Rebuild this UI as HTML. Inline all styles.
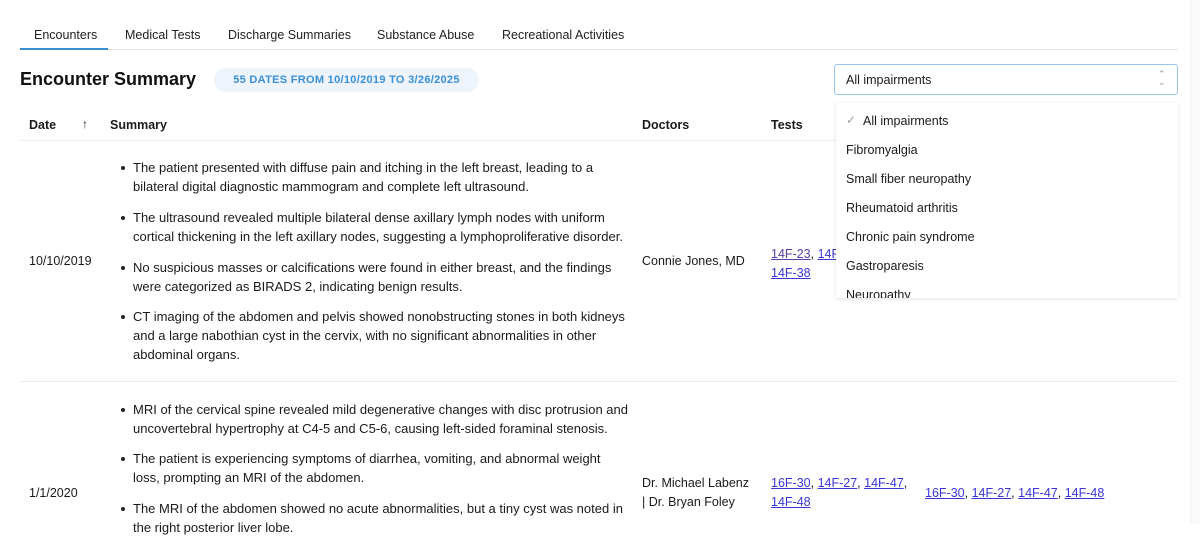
<!DOCTYPE html>
<html><head><meta charset="utf-8"><style>
*{margin:0;padding:0;box-sizing:border-box}
body{width:1200px;height:524px;overflow:hidden;background:#fff;font-family:"Liberation Sans",sans-serif;color:#1a1a1a;position:relative;font-size:12.5px}
.a{position:absolute;white-space:nowrap}
.tab{position:absolute;top:28px;font-size:12.5px;color:#222}
a{color:#3b35d6;text-decoration:underline}
.li{position:absolute;left:133px;line-height:19px;font-size:13px;white-space:nowrap}
.li:before{content:"";position:absolute;left:-12px;top:8px;width:4px;height:4px;border-radius:2px;background:#222}
</style></head><body>
<div class="tab" style="left:34px">Encounters</div>
<div class="tab" style="left:125px">Medical Tests</div>
<div class="tab" style="left:228px">Discharge Summaries</div>
<div class="tab" style="left:377px">Substance Abuse</div>
<div class="tab" style="left:502px">Recreational Activities</div>
<div class="a" style="left:20px;top:49px;width:1158px;height:1px;background:#dde3e8"></div>
<div class="a" style="left:20px;top:48px;width:88px;height:2px;background:#3a8fd0"></div>
<div class="a" style="left:20px;top:69px;font-size:18px;font-weight:bold;color:#111">Encounter Summary</div>
<div class="a" style="left:214px;top:68px;width:265px;height:24px;border-radius:12px;background:#edf4fc;color:#3a8fd8;font-size:11px;font-weight:bold;line-height:24px;text-align:center;letter-spacing:.3px">55 DATES FROM 10/10/2019 TO 3/26/2025</div>
<div class="a" style="left:29px;top:118px;font-weight:bold">Date</div>
<div class="a" style="left:82px;top:117px;font-size:12px">↑</div>
<div class="a" style="left:110px;top:118px;font-weight:bold">Summary</div>
<div class="a" style="left:642px;top:118px;font-weight:bold">Doctors</div>
<div class="a" style="left:771px;top:118px;font-weight:bold">Tests</div>
<div class="a" style="left:20px;top:140px;width:1158px;height:1px;background:#eceff1"></div>
<div class="li" style="top:158px">The patient presented with diffuse pain and itching in the left breast, leading to a<br>bilateral digital diagnostic mammogram and complete left ultrasound.</div>
<div class="li" style="top:208px">The ultrasound revealed multiple bilateral dense axillary lymph nodes with uniform<br>cortical thickening in the left axillary nodes, suggesting a lymphoproliferative disorder.</div>
<div class="li" style="top:258px">No suspicious masses or calcifications were found in either breast, and the findings<br>were categorized as BIRADS 2, indicating benign results.</div>
<div class="li" style="top:307px">CT imaging of the abdomen and pelvis showed nonobstructing stones in both kidneys<br>and a large nabothian cyst in the cervix, with no significant abnormalities in other<br>abdominal organs.</div>
<div class="a" style="left:29px;top:254px">10/10/2019</div>
<div class="a" style="left:642px;top:254px">Connie Jones, MD</div>
<div class="a" style="left:771px;top:245px;line-height:19px"><a style="color:#5a3fa8">14F-23</a>, <a>14F</a><br><a>14F-38</a></div>
<div class="a" style="left:20px;top:381px;width:1158px;height:1px;background:#eceff1"></div>
<div class="li" style="top:400px">MRI of the cervical spine revealed mild degenerative changes with disc protrusion and<br>uncovertebral hypertrophy at C4-5 and C5-6, causing left-sided foraminal stenosis.</div>
<div class="li" style="top:449px">The patient is experiencing symptoms of diarrhea, vomiting, and abnormal weight<br>loss, prompting an MRI of the abdomen.</div>
<div class="li" style="top:499px">The MRI of the abdomen showed no acute abnormalities, but a tiny cyst was noted in<br>the right posterior liver lobe.</div>
<div class="a" style="left:29px;top:486px">1/1/2020</div>
<div class="a" style="left:642px;top:474px;line-height:19px">Dr. Michael Labenz<br>| Dr. Bryan Foley</div>
<div class="a" style="left:771px;top:474px;line-height:19px"><a>16F-30</a>, <a>14F-27</a>, <a>14F-47</a>,<br><a>14F-48</a></div>
<div class="a" style="left:925px;top:486px"><a>16F-30</a>, <a>14F-27</a>, <a>14F-47</a>, <a>14F-48</a></div>
<div class="a" style="left:1190px;top:0;width:10px;height:524px;background:#fafafa;border-left:1px solid #f0f0f0"></div>
<div class="a" style="left:834px;top:64px;width:344px;height:31px;border:1px solid #9cc3ea;border-radius:3px;background:#fff"></div>
<div class="a" style="left:846px;top:73px">All impairments</div>
<div class="a" style="left:1158px;top:70px;font-size:9px;color:#999;line-height:8px">⌃<br>⌄</div>
<div class="a" style="left:836px;top:103px;width:342px;height:195px;background:#fff;box-shadow:0 1px 4px rgba(0,0,0,.12);overflow:hidden">
<div class="a" style="left:10px;top:10px;color:#999;font-size:12px">✓</div>
<div class="a" style="left:27px;top:11px">All impairments</div>
<div class="a" style="left:10px;top:40px">Fibromyalgia</div>
<div class="a" style="left:10px;top:69px">Small fiber neuropathy</div>
<div class="a" style="left:10px;top:98px">Rheumatoid arthritis</div>
<div class="a" style="left:10px;top:127px">Chronic pain syndrome</div>
<div class="a" style="left:10px;top:156px">Gastroparesis</div>
<div class="a" style="left:10px;top:185px">Neuropathy</div>
</div>
</body></html>
